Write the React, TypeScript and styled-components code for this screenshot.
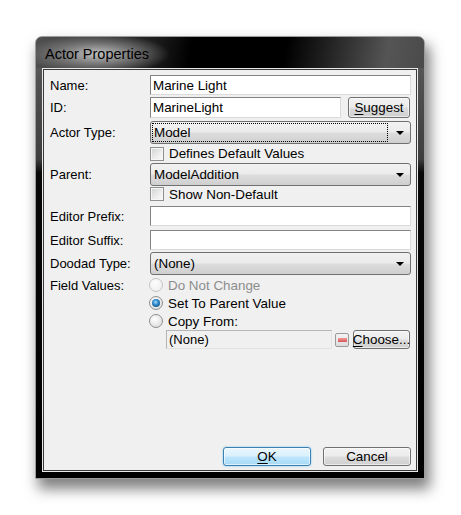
import React from "react";
import styled, { createGlobalStyle } from "styled-components";

const GlobalStyle = createGlobalStyle`
  html, body {
    margin: 0;
    padding: 0;
    background: #ffffff;
  }
  body {
    font-family: "Liberation Sans", Arial, sans-serif;
    font-size: 13px;
    color: #000;
  }
`;

const Page = styled.div`
  width: 461px;
  height: 515px;
  padding: 36px 0 0 35px;
  box-sizing: border-box;
`;

const Window = styled.div`
  width: 390px;
  height: 443px;
  box-sizing: border-box;
  border: 1px solid #9c9c9c;
  border-radius: 7px 7px 0 0;
  padding: 0 6px 6px;
  display: flex;
  flex-direction: column;
  background: linear-gradient(
    to bottom,
    #666 0px,
    #505050 45px,
    #3e3e3e 122px,
    #080808 136px,
    #000 100%
  );
  box-shadow: 4px 9px 14px 1px rgba(0, 0, 0, 0.5);
`;

const TitleBar = styled.div`
  height: 31px;
  margin: 0 -6px;
  padding: 3px 0 0 9px;
  box-sizing: border-box;
  display: flex;
  align-items: center;
  border-radius: 6px 6px 0 0;
  font-size: 14.5px;
  color: #000;
  background: radial-gradient(
      ellipse 72px 20px at 62px 17px,
      rgba(200, 200, 200, 0.95) 0%,
      rgba(150, 150, 150, 0.6) 55%,
      rgba(110, 110, 110, 0) 100%
    ),
    linear-gradient(
      100deg,
      #505050 0%,
      #1e1e1e 30%,
      #000 40%,
      #000 64%,
      #262626 76%,
      #555 90%,
      #4a4a4a 100%
    );
`;

const Client = styled.div`
  flex: 1;
  display: flex;
  flex-direction: column;
  background: #f0f0f0;
  border: 1px solid #eaeaea;
  box-shadow: inset 0 0 0 1px #3a3a3a;
  padding: 6px 6px 5px 7px;
`;

const Row = styled.div<{ $mt: number; $h: number; $indent?: number }>`
  display: flex;
  align-items: center;
  height: ${(p) => p.$h}px;
  margin-top: ${(p) => p.$mt}px;
  padding-left: ${(p) => p.$indent ?? 0}px;
`;

const Label = styled.div`
  width: 100px;
  flex: none;
  white-space: nowrap;
`;

const TextBox = styled.div<{ $w?: number }>`
  ${(p) => (p.$w ? `width: ${p.$w}px; flex: none;` : "flex: 1;")}
  height: 100%;
  box-sizing: border-box;
  background: #fff;
  border: 1px solid;
  border-color: #838383 #dadada #dadada #838383;
  padding: 0 2px;
  display: flex;
  align-items: center;
  white-space: nowrap;
  font-size: 13.4px;
`;

const ReadOnlyBox = styled.div`
  width: 166px;
  flex: none;
  height: 100%;
  box-sizing: border-box;
  background: #f0f0f0;
  border: 1px solid;
  border-color: #b5b5b5 #e2e2e2 #e2e2e2 #b5b5b5;
  padding: 0 2px;
  display: flex;
  align-items: center;
`;

const Combo = styled.div<{ $focused?: boolean }>`
  flex: 1;
  height: 100%;
  box-sizing: border-box;
  position: relative;
  border: 1px solid #707070;
  border-radius: 3px;
  background: linear-gradient(
    to bottom,
    #f2f2f2 0%,
    #ebebeb 48%,
    #dddddd 52%,
    #cfcfcf 100%
  );
  display: flex;
  align-items: center;
  padding-left: 3px;
  font-size: 13.4px;

  &::before {
    content: "";
    display: ${(p) => (p.$focused ? "block" : "none")};
    position: absolute;
    left: 1px;
    top: 1px;
    bottom: 1px;
    right: 22px;
    border: 1px dotted #000;
  }
`;

const Arrow = styled.span`
  position: absolute;
  right: 6px;
  top: 50%;
  margin-top: -2px;
  width: 0;
  height: 0;
  border-left: 4px solid transparent;
  border-right: 4px solid transparent;
  border-top: 4px solid #000;
`;

const Button = styled.div<{ $w: number; $default?: boolean; $ml?: number }>`
  width: ${(p) => p.$w}px;
  flex: none;
  height: 100%;
  box-sizing: border-box;
  margin-left: ${(p) => p.$ml ?? 0}px;
  border: 1px solid ${(p) => (p.$default ? "#3c7fb1" : "#707070")};
  border-radius: 3px;
  background: ${(p) =>
    p.$default
      ? "linear-gradient(to bottom, #eaf6fd 0%, #d9f0fc 48%, #bee6fd 52%, #a7d9f5 100%)"
      : "linear-gradient(to bottom, #f2f2f2 0%, #ebebeb 48%, #dddddd 52%, #cfcfcf 100%)"};
  box-shadow: ${(p) =>
    p.$default
      ? "inset 0 0 0 1px rgba(255,255,255,0.6), 0 0 2px #6bc3f0"
      : "inset 0 0 0 1px rgba(255,255,255,0.6)"};
  display: flex;
  align-items: center;
  justify-content: center;
  white-space: nowrap;
  font-size: 13.4px;

  u {
    text-decoration: underline;
    text-underline-offset: 2px;
  }
`;

const MinusButton = styled.div`
  width: 14px;
  height: 14px;
  flex: none;
  margin-left: 3px;
  box-sizing: border-box;
  border: 1px solid #9a9a9a;
  border-radius: 2px;
  background: linear-gradient(to bottom, #f4f4f4, #dcdcdc);
  display: flex;
  align-items: center;
  justify-content: center;

  &::after {
    content: "";
    width: 9px;
    height: 4px;
    background: linear-gradient(to bottom, #f39a9a, #d65454);
  }
`;

const CheckBox = styled.span`
  width: 14px;
  height: 14px;
  flex: none;
  box-sizing: border-box;
  border: 1px solid #8e8f8f;
  background: linear-gradient(135deg, #cfd1d4 0%, #eeeeee 60%, #fafafa 100%);
  box-shadow: inset 0 0 0 1px #f6f6f6;
  margin-right: 5px;
`;

const Radio = styled.span<{ $checked?: boolean; $disabled?: boolean }>`
  width: 14px;
  height: 14px;
  flex: none;
  box-sizing: border-box;
  border-radius: 50%;
  border: 1px solid ${(p) => (p.$disabled ? "#c4c4c4" : "#8e8f8f")};
  background: ${(p) =>
    p.$disabled
      ? "radial-gradient(circle at 40% 35%, #fdfdfd, #ececec)"
      : "radial-gradient(circle at 40% 35%, #ffffff, #d6d6d6)"};
  margin-right: 5px;
  margin-left: -1px;
  position: relative;

  &::after {
    content: "";
    display: ${(p) => (p.$checked ? "block" : "none")};
    position: absolute;
    left: 2px;
    top: 2px;
    width: 8px;
    height: 8px;
    border-radius: 50%;
    background: radial-gradient(
      circle at 45% 40%,
      #a6dcfb 0%,
      #2d8bd0 40%,
      #0b3354 100%
    );
  }
`;

const OptionText = styled.span<{ $disabled?: boolean }>`
  color: ${(p) => (p.$disabled ? "#8d8d8d" : "#000")};
  white-space: nowrap;
  font-size: 13.4px;
`;

const Footer = styled.div`
  margin-top: auto;
  height: 19px;
  display: flex;
  justify-content: flex-end;
  gap: 12px;
`;

export default function App() {
  return (
    <>
      <GlobalStyle />
      <Page>
        <Window>
          <TitleBar>Actor Properties</TitleBar>
          <Client>
            <Row $mt={0} $h={20}>
              <Label>Name:</Label>
              <TextBox>Marine Light</TextBox>
            </Row>
            <Row $mt={2} $h={21}>
              <Label>ID:</Label>
              <TextBox $w={191}>MarineLight</TextBox>
              <Button $w={62} $ml={7}>
                <span>
                  <u>S</u>uggest
                </span>
              </Button>
            </Row>
            <Row $mt={3} $h={23}>
              <Label>Actor Type:</Label>
              <Combo $focused>
                Model
                <Arrow />
              </Combo>
            </Row>
            <Row $mt={1} $h={17} $indent={100}>
              <CheckBox />
              <OptionText>Defines Default Values</OptionText>
            </Row>
            <Row $mt={1} $h={23}>
              <Label>Parent:</Label>
              <Combo>
                ModelAddition
                <Arrow />
              </Combo>
            </Row>
            <Row $mt={0} $h={16} $indent={100}>
              <CheckBox />
              <OptionText>Show Non-Default</OptionText>
            </Row>
            <Row $mt={4} $h={20}>
              <Label>Editor Prefix:</Label>
              <TextBox />
            </Row>
            <Row $mt={4} $h={20}>
              <Label>Editor Suffix:</Label>
              <TextBox />
            </Row>
            <Row $mt={2} $h={23}>
              <Label>Doodad Type:</Label>
              <Combo>
                (None)
                <Arrow />
              </Combo>
            </Row>
            <Row $mt={2} $h={16}>
              <Label>Field Values:</Label>
              <Radio $disabled />
              <OptionText $disabled>Do Not Change</OptionText>
            </Row>
            <Row $mt={2} $h={16} $indent={100}>
              <Radio $checked />
              <OptionText>Set To Parent Value</OptionText>
            </Row>
            <Row $mt={2} $h={16} $indent={100}>
              <Radio />
              <OptionText>Copy From:</OptionText>
            </Row>
            <Row $mt={1} $h={19} $indent={116}>
              <ReadOnlyBox>(None)</ReadOnlyBox>
              <MinusButton />
              <Button $w={57} $ml={4}>
                <span>
                  <u>C</u>hoose...
                </span>
              </Button>
            </Row>
            <Footer>
              <Button $w={88} $default>
                <span>
                  <u>O</u>K
                </span>
              </Button>
              <Button $w={88}>Cancel</Button>
            </Footer>
          </Client>
        </Window>
      </Page>
    </>
  );
}
